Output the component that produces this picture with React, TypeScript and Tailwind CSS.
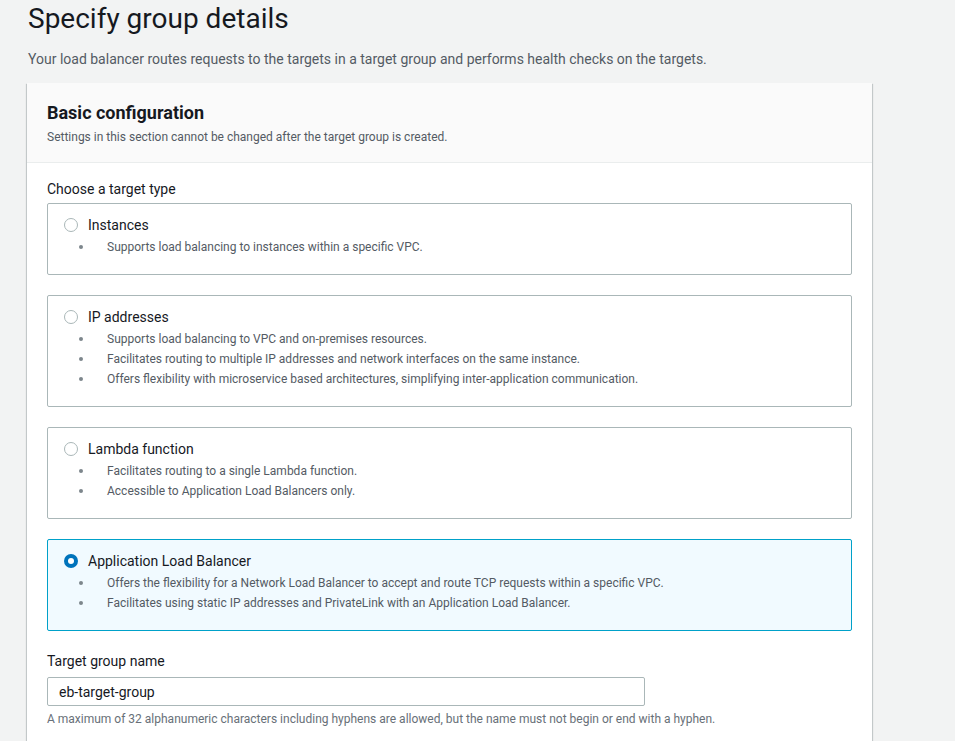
import React, { useState } from 'react';

type TargetType = {
    id: string;
    title: string;
    bullets: string[];
};

const targetTypes: TargetType[] = [
    {
        id: 'instance',
        title: 'Instances',
        bullets: ['Supports load balancing to instances within a specific VPC.'],
    },
    {
        id: 'ip',
        title: 'IP addresses',
        bullets: [
            'Supports load balancing to VPC and on-premises resources.',
            'Facilitates routing to multiple IP addresses and network interfaces on the same instance.',
            'Offers flexibility with microservice based architectures, simplifying inter-application communication.',
        ],
    },
    {
        id: 'lambda',
        title: 'Lambda function',
        bullets: ['Facilitates routing to a single Lambda function.', 'Accessible to Application Load Balancers only.'],
    },
    {
        id: 'alb',
        title: 'Application Load Balancer',
        bullets: [
            'Offers the flexibility for a Network Load Balancer to accept and route TCP requests within a specific VPC.',
            'Facilitates using static IP addresses and PrivateLink with an Application Load Balancer.',
        ],
    },
];

const Radio: React.FC<{ checked: boolean }> = ({ checked }) =>
    checked ? (
        <span className="w-[14px] h-[14px] rounded-full bg-[#0073bb] flex items-center justify-center shrink-0">
            <span className="w-[6px] h-[6px] rounded-full bg-white" />
        </span>
    ) : (
        <span className="w-[14px] h-[14px] rounded-full border border-[#aab7b8] bg-white shrink-0" />
    );

const TargetTile: React.FC<{ item: TargetType; checked: boolean; onSelect: () => void }> = ({ item, checked, onSelect }) => (
    <div
        onClick={onSelect}
        className={`border rounded-[2px] pt-[11px] pb-[17px] px-[16px] cursor-pointer ${
            checked ? 'border-[#00a1c9] bg-[#f1faff]' : 'border-[#aab7b8] bg-white'
        }`}
    >
        <div className="flex items-center gap-[10px] h-5">
            <Radio checked={checked} />
            <span className="text-[14px] text-[#16191f]">{item.title}</span>
        </div>
        <ul className="mt-[2px] text-[12px] text-[#545b64]">
            {item.bullets.map((b) => (
                <li key={b} className="flex items-center h-5">
                    <span className="ml-[15px] mb-[1px] w-[4px] h-[4px] rounded-full bg-[#7d868c] shrink-0" />
                    <span className="ml-[24px]">{b}</span>
                </li>
            ))}
        </ul>
    </div>
);

export default function App() {
    const [selected, setSelected] = useState('alb');
    const [name, setName] = useState('eb-target-group');

    return (
        <div className="min-h-screen bg-[#f2f3f3] text-[#16191f] font-['Roboto',sans-serif] overflow-hidden">
            <div className="pl-[28px] w-[871px] pt-[2px]">
                <h1 className="text-[28px] leading-[34px] font-normal">Specify group details</h1>
                <p className="mt-[13px] text-[14px] leading-5 text-[#545b64]">
                    Your load balancer routes requests to the targets in a target group and performs health checks on the targets.
                </p>
            </div>

            {/* Basic configuration card */}
            <div className="ml-[27px] mt-[14px] w-[845px] bg-white shadow-[0_1px_1px_0_rgba(0,28,36,0.3),1px_1px_1px_0_rgba(0,28,36,0.15),-1px_1px_1px_0_rgba(0,28,36,0.15)]">
                <div className="bg-[#fafafa] border-b border-[#eaeded] px-[20px] pt-[18px] pb-[17px]">
                    <h2 className="text-[18px] leading-[24px] font-bold">Basic configuration</h2>
                    <p className="text-[12px] leading-[16px] text-[#545b64] mt-[4px]">
                        Settings in this section cannot be changed after the target group is created.
                    </p>
                </div>

                <div className="px-[20px] pt-[16px]">
                    <div className="text-[14px] leading-5 mb-[4px]">Choose a target type</div>
                    <div className="flex flex-col gap-[20px]">
                        {targetTypes.map((t) => (
                            <TargetTile key={t.id} item={t} checked={selected === t.id} onSelect={() => setSelected(t.id)} />
                        ))}
                    </div>

                    <div className="mt-[20px]">
                        <label className="block text-[14px] leading-5 mb-[6px]">Target group name</label>
                        <input
                            value={name}
                            onChange={(e) => setName(e.target.value)}
                            className="w-[598px] h-[29px] border border-[#aab7b8] rounded-[2px] px-[11px] text-[14px] text-[#16191f] bg-white outline-none"
                        />
                        <p className="text-[12px] leading-4 text-[#687078] mt-[5px] pb-[20px]">
                            A maximum of 32 alphanumeric characters including hyphens are allowed, but the name must not begin or end with a hyphen.
                        </p>
                    </div>
                </div>
            </div>
        </div>
    );
}
